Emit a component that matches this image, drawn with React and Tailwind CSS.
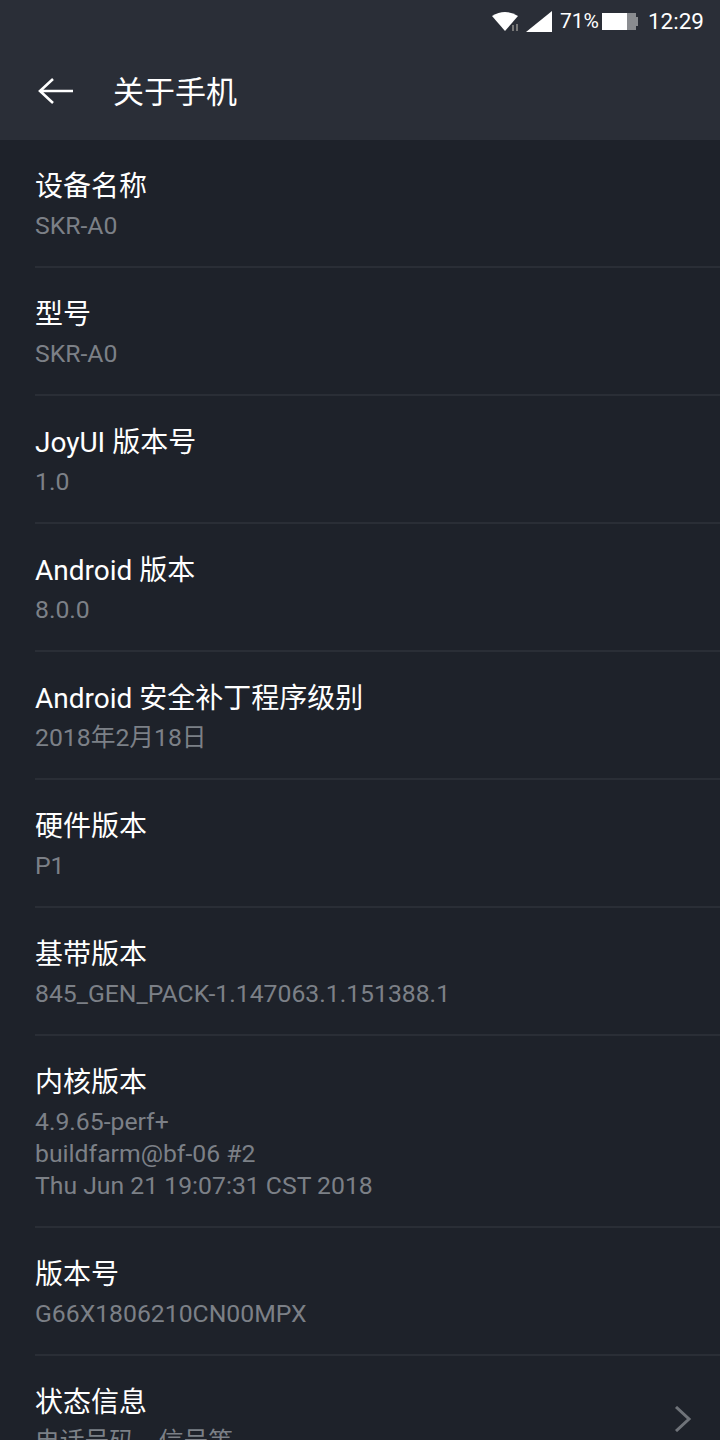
import React from 'react';

const font = { fontFamily: 'Roboto, "Noto Sans CJK SC", sans-serif' };

const rows = [
  { title: '设备名称', sub: ['SKR-A0'] },
  { title: '型号', sub: ['SKR-A0'] },
  { title: 'JoyUI 版本号', sub: ['1.0'] },
  { title: 'Android 版本', sub: ['8.0.0'] },
  { title: 'Android 安全补丁程序级别', sub: ['2018年2月18日'] },
  { title: '硬件版本', sub: ['P1'] },
  { title: '基带版本', sub: ['845_GEN_PACK-1.147063.1.151388.1'] },
  { title: '内核版本', sub: ['4.9.65-perf+', 'buildfarm@bf-06 #2', 'Thu Jun 21 19:07:31 CST 2018'] },
  { title: '版本号', sub: ['G66X1806210CN00MPX'] },
  { title: '状态信息', sub: ['电话号码、信号等'], arrow: true },
];

const StatusBar = () => (
  <div className="flex h-[42px] items-center justify-end pr-[16px] text-white">
    <svg width="27" height="21" viewBox="0 0 27 21" className="mr-[7px]">
      <path d="M0 5 Q13 -3 26 5 L13 20 Z" fill="#fff" />
      <rect x="20" y="14" width="2" height="6" fill="#777" />
      <rect x="24" y="13" width="2" height="7" fill="#777" />
    </svg>
    <svg width="26" height="21" viewBox="0 0 26 21" className="mr-[8px]">
      <path d="M26 0 V21 H0 Z" fill="#fff" />
    </svg>
    <span className="mt-[2px] text-[21px]">71%</span>
    <div className="ml-[3px] mr-[10px] flex h-[17px] items-center">
      <div className="h-[17px] w-[25px] bg-white" />
      <div className="h-[17px] w-[9px] bg-[#8a8c90]" />
      <div className="h-[9px] w-[2px] bg-[#8a8c90]" />
    </div>
    <span className="mt-[2px] text-[22.5px]">12:29</span>
  </div>
);

const Row = ({ title, sub, arrow }) => (
  <div className="relative ml-[35px] border-b-2 border-[#2a2e36] pt-[29px] pb-[24px] last:border-b-0">
    <div className="h-[36px] text-[28px] leading-[36px] text-white">{title}</div>
    <div className="mt-[5px] text-[24.75px] leading-[32px] text-[#7c8087]">
      {sub.map((line) => (
        <div key={line}>{line}</div>
      ))}
    </div>
    {arrow && (
      <svg
        width="18"
        height="26"
        viewBox="0 0 18 26"
        fill="none"
        className="absolute right-[28px] top-[50px]"
      >
        <path d="M2 1 L15 13 L2 25" stroke="#6f7379" strokeWidth="3" />
      </svg>
    )}
  </div>
);

export default function App() {
  return (
    <div className="h-[1440px] w-[720px] overflow-hidden bg-[#1e222a]" style={font}>
      <div className="h-[140px] bg-[#2a2e37]">
        <StatusBar />
        <div className="flex h-[98px] items-center">
          <svg
            width="36"
            height="28"
            viewBox="0 0 36 28"
            fill="none"
            className="ml-[38px]"
          >
            <path d="M35 14 H3 M15 2 L2 14 L15 26" stroke="#fff" strokeWidth="2.6" />
          </svg>
          <span className="ml-[39px] mt-[4px] text-[31px] text-white">关于手机</span>
        </div>
      </div>
      {rows.map((row) => (
        <Row key={row.title} {...row} />
      ))}
    </div>
  );
}
